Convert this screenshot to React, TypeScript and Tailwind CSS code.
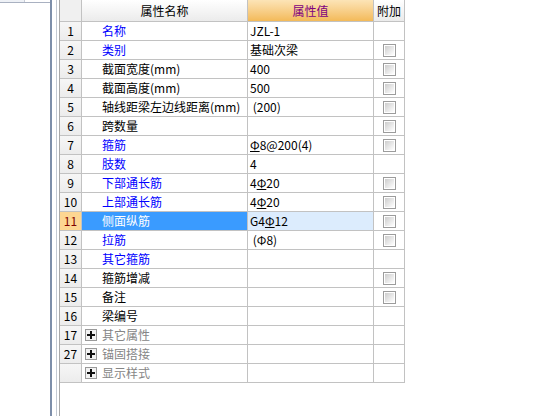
import React from "react";

type Row = {
  n: string;
  name: string;
  tone?: "blue" | "black" | "gray";
  value?: React.ReactNode;
  check?: boolean;
  selected?: boolean;
  group?: boolean;
};

// grade symbol with the bar under it (HRB bar)
function Grade() {
  return <span className="underline decoration-1 underline-offset-[1px]">Φ</span>;
}

const rows: Row[] = [
  { n: "1", name: "名称", tone: "blue", value: "JZL-1" },
  { n: "2", name: "类别", tone: "blue", value: "基础次梁", check: true },
  { n: "3", name: "截面宽度(mm)", value: "400", check: true },
  { n: "4", name: "截面高度(mm)", value: "500", check: true },
  { n: "5", name: "轴线距梁左边线距离(mm)", value: " (200)", check: true },
  { n: "6", name: "跨数量", check: true },
  {
    n: "7",
    name: "箍筋",
    tone: "blue",
    value: (
      <>
        <Grade />8@200(4)
      </>
    ),
    check: true,
  },
  { n: "8", name: "肢数", tone: "blue", value: "4" },
  {
    n: "9",
    name: "下部通长筋",
    tone: "blue",
    value: (
      <>
        4<Grade />20
      </>
    ),
    check: true,
  },
  {
    n: "10",
    name: "上部通长筋",
    tone: "blue",
    value: (
      <>
        4<Grade />20
      </>
    ),
    check: true,
  },
  {
    n: "11",
    name: "侧面纵筋",
    tone: "blue",
    selected: true,
    value: (
      <>
        G4<Grade />12
      </>
    ),
    check: true,
  },
  { n: "12", name: "拉筋", tone: "blue", value: " (Φ8)", check: true },
  { n: "13", name: "其它箍筋", tone: "blue" },
  { n: "14", name: "箍筋增减", check: true },
  { n: "15", name: "备注", check: true },
  { n: "16", name: "梁编号" },
  { n: "17", name: "其它属性", group: true },
  { n: "27", name: "锚固搭接", group: true },
  { n: "", name: "显示样式", group: true },
];

function CheckBox() {
  return (
    <div className="w-[13px] h-[13px] border border-[#9c9c9c] bg-white p-px">
      <div className="w-full h-full bg-gradient-to-br from-[#cdcdcd] via-[#e6e6e6] to-white" />
    </div>
  );
}

function PlusBox() {
  return (
    <div className="w-[12px] h-[12px] border border-[#9a9a9a] bg-[#f2f2f2] flex items-center justify-center">
      <svg width="8" height="8" viewBox="0 0 8 8">
        <rect x="0" y="3" width="8" height="2" fill="#111" />
        <rect x="3" y="0" width="2" height="8" fill="#111" />
      </svg>
    </div>
  );
}

export default function App() {
  const font = "font-['Noto_Sans_CJK_SC','Noto_Sans',sans-serif] text-[12px] leading-none";

  return (
    <div className={`w-[544px] h-[416px] bg-white flex overflow-hidden ${font}`}>
      {/* left panel edge */}
      <div className="w-[50px] flex flex-col">
        <div className="h-[3px] border-b border-[#a9b1c1] flex">
          <div className="w-[25px] bg-[#eef1f6] border-r border-[#c8ccd6]" />
        </div>
      </div>
      <div className="w-[2px] bg-[#7d8ea9]" />
      <div className="w-[4px]" />
      <div className="w-px bg-[#c4cad3]" />
      <div className="w-[2px]" />
      <div className="w-px bg-[#a8a8a8]" />

      {/* property grid */}
      <div className="flex-1">
        <div className="grid grid-cols-[22px_166px_126px_31px] grid-rows-[22px] auto-rows-[19px]">
          <div className="bg-[#f0f0f0] border-r border-b border-[#c2c2c2]" />
          <div className="bg-gradient-to-b from-white to-[#ebebeb] border-r border-b border-[#c2c2c2] flex items-center justify-center text-black">
            属性名称
          </div>
          <div className="bg-gradient-to-b from-[#fce4b6] to-[#f3ba58] border-r border-b border-[#c2c2c2] flex items-center justify-center text-[#800080]">
            属性值
          </div>
          <div className="bg-gradient-to-b from-white to-[#ebebeb] border-r border-b border-[#c2c2c2] flex items-center justify-center text-black">
            附加
          </div>

          {rows.map((r) => {
            const color = r.group
              ? "text-[#858585]"
              : r.selected
              ? "text-white"
              : r.tone === "blue"
              ? "text-[#0000ff]"
              : "text-black";
            return (
              <React.Fragment key={r.name}>
                <div
                  className={`border-r border-b border-[#c2c2c2] flex items-center justify-center ${
                    r.selected ? "bg-[#fdd692] text-[#800000]" : "bg-gradient-to-b from-[#f6f6f6] to-[#ececec] text-black"
                  }`}
                >
                  {r.n}
                </div>
                <div
                  className={`border-r border-b border-[#c2c2c2] flex items-center whitespace-nowrap overflow-hidden ${
                    r.selected ? "bg-[#3a9bff]" : ""
                  } ${r.group ? "pl-[3px] gap-[5px]" : "pl-[20px]"} ${color}`}
                >
                  {r.group && <PlusBox />}
                  {r.name}
                </div>
                <div
                  className={`border-r border-b border-[#c2c2c2] flex items-center pl-[2px] whitespace-pre text-black ${
                    r.selected ? "bg-[#dcecfd]" : ""
                  }`}
                >
                  {r.value}
                </div>
                <div className="border-r border-b border-[#c2c2c2] flex items-center justify-center pl-px">
                  {r.check && <CheckBox />}
                </div>
              </React.Fragment>
            );
          })}
        </div>
      </div>
    </div>
  );
}
